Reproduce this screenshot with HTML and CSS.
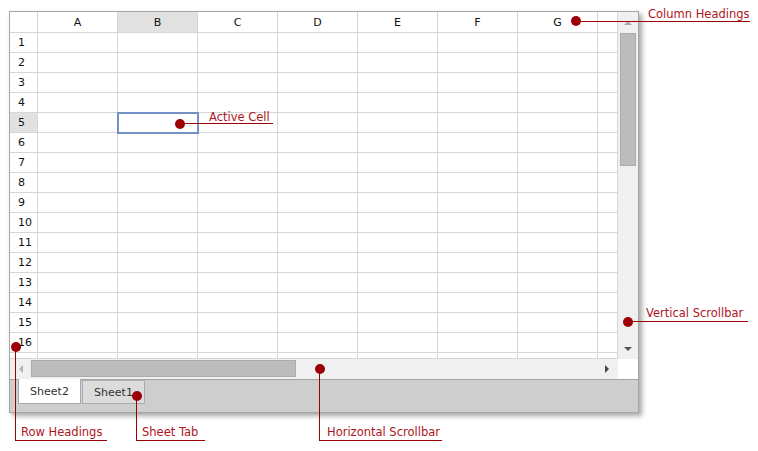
FILE: index.html
```html
<!DOCTYPE html>
<html>
<head>
<meta charset="utf-8">
<link rel="stylesheet" href="styles.css">
</head>
<body>
<div class="stage">
  <div class="window">
    <div class="main">
      <div class="grid">
        <div class="hd"></div><div class="hd">A</div><div class="hd sel">B</div><div class="hd">C</div><div class="hd">D</div><div class="hd">E</div><div class="hd">F</div><div class="hd">G</div><div class="hd"></div>
        <div class="rh">1</div><div></div><div></div><div></div><div></div><div></div><div></div><div></div><div></div>
        <div class="rh">2</div><div></div><div></div><div></div><div></div><div></div><div></div><div></div><div></div>
        <div class="rh">3</div><div></div><div></div><div></div><div></div><div></div><div></div><div></div><div></div>
        <div class="rh">4</div><div></div><div></div><div></div><div></div><div></div><div></div><div></div><div></div>
        <div class="rh sel">5</div><div></div><div class="active"><div class="cursor"></div></div><div></div><div></div><div></div><div></div><div></div><div></div>
        <div class="rh">6</div><div></div><div></div><div></div><div></div><div></div><div></div><div></div><div></div>
        <div class="rh">7</div><div></div><div></div><div></div><div></div><div></div><div></div><div></div><div></div>
        <div class="rh">8</div><div></div><div></div><div></div><div></div><div></div><div></div><div></div><div></div>
        <div class="rh">9</div><div></div><div></div><div></div><div></div><div></div><div></div><div></div><div></div>
        <div class="rh">10</div><div></div><div></div><div></div><div></div><div></div><div></div><div></div><div></div>
        <div class="rh">11</div><div></div><div></div><div></div><div></div><div></div><div></div><div></div><div></div>
        <div class="rh">12</div><div></div><div></div><div></div><div></div><div></div><div></div><div></div><div></div>
        <div class="rh">13</div><div></div><div></div><div></div><div></div><div></div><div></div><div></div><div></div>
        <div class="rh">14</div><div></div><div></div><div></div><div></div><div></div><div></div><div></div><div></div>
        <div class="rh">15</div><div></div><div></div><div></div><div></div><div></div><div></div><div></div><div></div>
        <div class="rh">16</div><div></div><div></div><div></div><div></div><div></div><div></div><div></div><div></div>
        <div class="rh"></div><div></div><div></div><div></div><div></div><div></div><div></div><div></div><div></div>
      </div>
      <div class="vscroll">
        <div class="sbtn"><span class="arr-up"></span></div>
        <div class="vthumb"></div>
        <div class="fill"></div>
        <div class="sbtn"><span class="arr-down"></span></div>
      </div>
    </div>
    <div class="hbar">
      <div class="hscroll">
        <div class="hbtn-l"><span class="arr-left"></span></div>
        <div class="hthumb"></div>
        <div class="fill"></div>
        <div class="hbtn-r"><span class="arr-right"></span></div>
      </div>
      <div class="corner"></div>
    </div>
    <div class="tabs">
      <div class="tab current">Sheet2</div>
      <div class="tab">Sheet1</div>
    </div>
  </div>

  <div class="dot d-col"></div><div class="ln l-col"></div><div class="label t-col">Column Headings</div>
  <div class="dot d-act"></div><div class="ln l-act"></div><div class="label t-act">Active Cell</div>
  <div class="dot d-vs"></div><div class="ln l-vs"></div><div class="label t-vs">Vertical Scrollbar</div>
  <div class="dot d-row"></div><div class="ln l-row-v"></div><div class="ln l-row-h"></div><div class="label t-row">Row Headings</div>
  <div class="dot d-tab"></div><div class="ln l-tab-v"></div><div class="ln l-tab-h"></div><div class="label t-tab">Sheet Tab</div>
  <div class="dot d-hs"></div><div class="ln l-hs-v"></div><div class="ln l-hs-h"></div><div class="label t-hs">Horizontal Scrollbar</div>
</div>
</body>
</html>
```
FILE: styles.css
```css
* { box-sizing: border-box; }
body { margin: 0; background: #fff; font-family: "DejaVu Sans", sans-serif; }
.stage { position: relative; width: 758px; height: 451px; padding: 11px 0 0 9px; }

.window {
  width: 630px; height: 402px;
  border: 1px solid #a6a6a6;
  background: #fff;
  display: flex; flex-direction: column;
  box-shadow: 3px 3px 5px rgba(0,0,0,0.35);
}
.main { display: flex; height: 347px; }
.grid {
  display: grid;
  grid-template-columns: 28px repeat(7, 80px) 20px;
  grid-template-rows: 21px repeat(16, 20px) 6px;
  width: 608px;
}
.grid > div { border-right: 1px solid #d6d6d6; border-bottom: 1px solid #d6d6d6; }
.hd { font-size: 11px; color: #111; display: flex; align-items: center; justify-content: center; }
.rh { font-size: 11px; color: #111; display: flex; align-items: center; padding-left: 8px; }
.sel { background: #e1e1e1; }
.active { position: relative; }
.cursor {
  position: absolute; left: -1px; top: -1px;
  width: 82px; height: 22px;
  border: 2px solid #7391c2;
}

.vscroll { width: 20px; background: #f0f0f0; display: flex; flex-direction: column; }
.sbtn { height: 21px; display: flex; align-items: center; justify-content: center; }
.vthumb { height: 133px; margin: 0 2px; background: #bcbcbc; border: 1px solid #ababab; }
.fill { flex: 1; }
.arr-up { width: 0; height: 0; border-left: 4px solid transparent; border-right: 4px solid transparent; border-bottom: 4px solid #a9a9a9; }
.arr-down { width: 0; height: 0; border-left: 4px solid transparent; border-right: 4px solid transparent; border-top: 4px solid #555; }

.hbar { display: flex; height: 20px; }
.hscroll { width: 608px; background: #f0f0f0; display: flex; }
.corner { width: 20px; background: #fff; }
.hbtn-l { width: 21px; display: flex; align-items: center; justify-content: center; }
.hbtn-r { width: 20px; display: flex; align-items: center; justify-content: center; padding-right: 2px; }
.hthumb { width: 265px; height: 17px; margin-top: 1px; background: #bcbcbc; border: 1px solid #ababab; }
.arr-left { width: 0; height: 0; border-top: 4px solid transparent; border-bottom: 4px solid transparent; border-right: 4px solid #b3b3b3; }
.arr-right { width: 0; height: 0; border-top: 4px solid transparent; border-bottom: 4px solid transparent; border-left: 4px solid #444; }

.tabs {
  height: 33px; background: #cecece; border-top: 1px solid #a4a4a4;
  display: flex; align-items: flex-start; gap: 1px; padding-left: 8px;
}
.tab {
  width: 63px; height: 24px;
  font-size: 11px; color: #333;
  display: flex; align-items: center; justify-content: center;
  background: #dcdcdc; border: 1px solid #adadad;
}
.tab.current { margin-top: -1px; height: 25px; background: #fff; border-top: none; border-color: #a9a9a9; }

/* callouts */
.dot { position: absolute; width: 10px; height: 10px; border-radius: 50%; background: #9c0006; }
.ln { position: absolute; background: #9c0006; }
.label { position: absolute; font-size: 11.5px; line-height: 13px; color: #ad1422; white-space: nowrap; }

.d-col { left: 571px; top: 16px; }
.l-col { left: 576px; top: 21px; width: 174px; height: 1px; }
.t-col { left: 648px; top: 8px; }

.d-act { left: 175px; top: 119px; }
.l-act { left: 179px; top: 123px; width: 94px; height: 1px; }
.t-act { left: 209px; top: 111px; }

.d-vs { left: 623px; top: 317px; }
.l-vs { left: 627px; top: 321px; width: 121px; height: 1px; }
.t-vs { left: 646px; top: 307px; }

.d-row { left: 11px; top: 342px; }
.l-row-v { left: 15px; top: 346px; width: 1px; height: 95px; }
.l-row-h { left: 15px; top: 440px; width: 92px; height: 1px; }
.t-row { left: 21px; top: 426px; }

.d-tab { left: 132px; top: 391px; }
.l-tab-v { left: 136px; top: 396px; width: 1px; height: 45px; }
.l-tab-h { left: 136px; top: 440px; width: 69px; height: 1px; }
.t-tab { left: 142px; top: 426px; }

.d-hs { left: 315px; top: 364px; }
.l-hs-v { left: 319px; top: 368px; width: 1px; height: 73px; }
.l-hs-h { left: 319px; top: 440px; width: 123px; height: 1px; }
.t-hs { left: 327px; top: 426px; }
```
